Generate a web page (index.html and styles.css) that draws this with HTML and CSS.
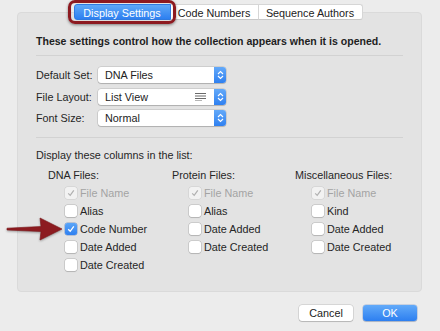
FILE: index.html
```html
<!DOCTYPE html>
<html>
<head>
<meta charset="utf-8">
<link rel="stylesheet" href="styles.css">
</head>
<body>
<div class="window">
  <div class="tabbar">
    <div class="tab active">Display Settings</div>
    <div class="tab">Code Numbers</div>
    <div class="tab">Sequence Authors</div>
  </div>
  <div class="panel">
    <div class="intro">These settings control how the collection appears when it is opened.</div>
    <div class="sep"></div>
    <div class="form">
      <div class="frow">
        <span class="flabel">Default Set:</span>
        <div class="popup"><span class="ptext">DNA Files</span><span class="stepper"><svg width="7" height="10" viewBox="0 0 7 10"><path d="M1 4 L3.5 1.5 L6 4 M1 6 L3.5 8.5 L6 6" fill="none" stroke="#fff" stroke-width="1.1"/></svg></span></div>
      </div>
      <div class="frow">
        <span class="flabel">File Layout:</span>
        <div class="popup"><span class="ptext">List View</span><svg class="listicon" width="11" height="8" viewBox="0 0 11 8"><path d="M0 0.5H11M0 3H11M0 5.5H11M0 8H7" stroke="#6a6a6a" stroke-width="1"/></svg><span class="stepper"><svg width="7" height="10" viewBox="0 0 7 10"><path d="M1 4 L3.5 1.5 L6 4 M1 6 L3.5 8.5 L6 6" fill="none" stroke="#fff" stroke-width="1.1"/></svg></span></div>
      </div>
      <div class="frow">
        <span class="flabel">Font Size:</span>
        <div class="popup"><span class="ptext">Normal</span><span class="stepper"><svg width="7" height="10" viewBox="0 0 7 10"><path d="M1 4 L3.5 1.5 L6 4 M1 6 L3.5 8.5 L6 6" fill="none" stroke="#fff" stroke-width="1.1"/></svg></span></div>
      </div>
    </div>
    <div class="sep sep2"></div>
    <div class="colintro">Display these columns in the list:</div>
    <div class="cols">
      <div class="col">
        <div class="colhead">DNA Files:</div>
        <div class="item disabled"><span class="cb dis"><svg width="8" height="8" viewBox="0 0 8 8"><path d="M1.2 4.3 L3.2 6.3 L6.8 1.3" fill="none" stroke="#b0b0b0" stroke-width="1.2"/></svg></span>File Name</div>
        <div class="item"><span class="cb"></span>Alias</div>
        <div class="item"><span class="cb on"><svg width="8" height="8" viewBox="0 0 8 8"><path d="M1.2 4.3 L3.2 6.3 L6.8 1.3" fill="none" stroke="#fff" stroke-width="1.3"/></svg></span>Code Number</div>
        <div class="item"><span class="cb"></span>Date Added</div>
        <div class="item"><span class="cb"></span>Date Created</div>
      </div>
      <div class="col">
        <div class="colhead">Protein Files:</div>
        <div class="item disabled"><span class="cb dis"><svg width="8" height="8" viewBox="0 0 8 8"><path d="M1.2 4.3 L3.2 6.3 L6.8 1.3" fill="none" stroke="#b0b0b0" stroke-width="1.2"/></svg></span>File Name</div>
        <div class="item"><span class="cb"></span>Alias</div>
        <div class="item"><span class="cb"></span>Date Added</div>
        <div class="item"><span class="cb"></span>Date Created</div>
      </div>
      <div class="col">
        <div class="colhead">Miscellaneous Files:</div>
        <div class="item disabled"><span class="cb dis"><svg width="8" height="8" viewBox="0 0 8 8"><path d="M1.2 4.3 L3.2 6.3 L6.8 1.3" fill="none" stroke="#b0b0b0" stroke-width="1.2"/></svg></span>File Name</div>
        <div class="item"><span class="cb"></span>Kind</div>
        <div class="item"><span class="cb"></span>Date Added</div>
        <div class="item"><span class="cb"></span>Date Created</div>
      </div>
    </div>
  </div>
  <div class="footer">
    <div class="btn">Cancel</div>
    <div class="btn primary">OK</div>
  </div>
  <div class="ring"></div>
  <svg class="arrow" width="60" height="26" viewBox="0 0 60 26">
    <path d="M2 12.2 L36 10.5 L35 2 L57 13 L35 24 L36 15.5 L2 14 Z" fill="#8c1b20" stroke="#7a1418" stroke-width="0.6" stroke-linejoin="round"/>
  </svg>
</div>
</body>
</html>
```

FILE: styles.css
```css
html, body {
  margin: 0;
  padding: 0;
}
body {
  background: #ececec;
  font-family: "Liberation Sans", Arial, sans-serif;
  font-size: 10.8px;
  color: #222;
  width: 440px;
  height: 331px;
  overflow: hidden;
}
.window {
  position: relative;
  width: 440px;
  height: 331px;
}
.tabbar {
  display: flex;
  justify-content: center;
  padding-top: 4px;
  margin-left: -4px;
  position: relative;
  z-index: 2;
}
.tab {
  height: 16px;
  line-height: 16px;
  background: #fff;
  color: #222;
  font-size: 10.8px;
  text-align: center;
  border-top: 1px solid #d6d6d6;
  border-bottom: 1px solid #c8c8c8;
  border-right: 1px solid #d6d6d6;
  box-sizing: border-box;
}
.tab:nth-child(1) { width: 97px; border-radius: 3px 0 0 3px; border-left: 1px solid #d6d6d6; }
.tab:nth-child(2) { width: 88px; }
.tab:nth-child(3) { width: 104px; border-radius: 0 3px 3px 0; }
.tab.active {
  background: linear-gradient(#5fa8f8, #2d7ff0);
  color: #fff;
  border-color: #2f7ae0;
}
.panel {
  margin: -8px 18px 0 17px;
  height: 280px;
  box-sizing: border-box;
  background: #e3e3e3;
  border: 1px solid #dadada;
  border-radius: 4px;
  padding: 0 18px 0 18px;
}
.intro {
  margin-top: 21px;
  font-weight: bold;
  font-size: 10.55px;
  line-height: 14px;
  color: #1e1e1e;
  white-space: nowrap;
}
.sep {
  height: 1px;
  background: #d2d2d2;
  margin-top: 7px;
}
.form {
  margin-top: 11px;
  display: flex;
  flex-direction: column;
  gap: 5.5px;
}
.frow {
  display: flex;
  align-items: center;
  height: 16px;
}
.flabel {
  width: 62px;
  color: #262626;
}
.popup {
  width: 128px;
  height: 16px;
  background: #fff;
  border-radius: 3px;
  box-shadow: 0 0 0 0.5px rgba(0,0,0,0.18), 0 1px 1px rgba(0,0,0,0.15);
  display: flex;
  align-items: center;
  position: relative;
}
.ptext {
  flex: 1;
  padding-left: 7px;
  color: #222;
}
.listicon {
  margin-right: 8px;
}
.stepper {
  width: 12px;
  height: 16px;
  background: linear-gradient(#63a9f9, #2f80f0);
  border-radius: 0 3px 3px 0;
  display: flex;
  align-items: center;
  justify-content: center;
}
.sep2 {
  margin-top: 11px;
}
.colintro {
  margin-top: 10px;
  line-height: 14px;
  color: #262626;
}
.cols {
  display: flex;
  margin-top: 6px;
  padding-left: 12px;
}
.col {
  width: 124px;
  flex-shrink: 0;
}
.col:nth-child(2) { width: 123px; }
.colhead {
  line-height: 14px;
  color: #262626;
  margin-bottom: 2px;
  white-space: nowrap;
}
.item {
  height: 18px;
  display: flex;
  align-items: center;
  padding-left: 17px;
  color: #262626;
  white-space: nowrap;
}
.item.disabled {
  color: #a3a3a3;
}
.cb {
  width: 12px;
  height: 12px;
  box-sizing: border-box;
  background: #fff;
  border-radius: 2.5px;
  box-shadow: 0 0 0 0.5px rgba(0,0,0,0.2), 0 1px 1px rgba(0,0,0,0.12);
  margin-right: 3px;
  display: flex;
  align-items: center;
  justify-content: center;
  flex-shrink: 0;
}
.cb.dis {
  background: #f2f2f2;
  box-shadow: 0 0 0 0.5px rgba(0,0,0,0.1);
}
.cb.on {
  background: linear-gradient(#5aa5f8, #2f80f0);
  box-shadow: 0 0 0 0.5px rgba(0,60,160,0.4);
}
.footer {
  display: flex;
  justify-content: flex-end;
  gap: 10px;
  padding-right: 23px;
  margin-top: 13px;
}
.btn {
  width: 54px;
  height: 16px;
  line-height: 16px;
  text-align: center;
  background: #fff;
  border-radius: 3px;
  box-shadow: 0 0 0 0.5px rgba(0,0,0,0.18), 0 1px 1px rgba(0,0,0,0.15);
  color: #222;
}
.btn.primary {
  background: linear-gradient(#62aaf9, #2d7ff0);
  color: #fff;
  box-shadow: 0 0 0 0.5px rgba(0,60,160,0.3), 0 1px 1px rgba(0,0,0,0.15);
}
.ring {
  position: absolute;
  left: 68px;
  top: 0;
  width: 108px;
  height: 24px;
  box-sizing: border-box;
  border: 3.5px solid #8d1a20;
  border-radius: 7px;
  box-shadow: 0 1px 3px rgba(0,0,0,0.45), inset 0 0 1px rgba(0,0,0,0.3);
  z-index: 3;
}
.arrow {
  position: absolute;
  left: 5px;
  top: 216px;
  z-index: 3;
  filter: drop-shadow(0 1px 1px rgba(0,0,0,0.35));
}
```
